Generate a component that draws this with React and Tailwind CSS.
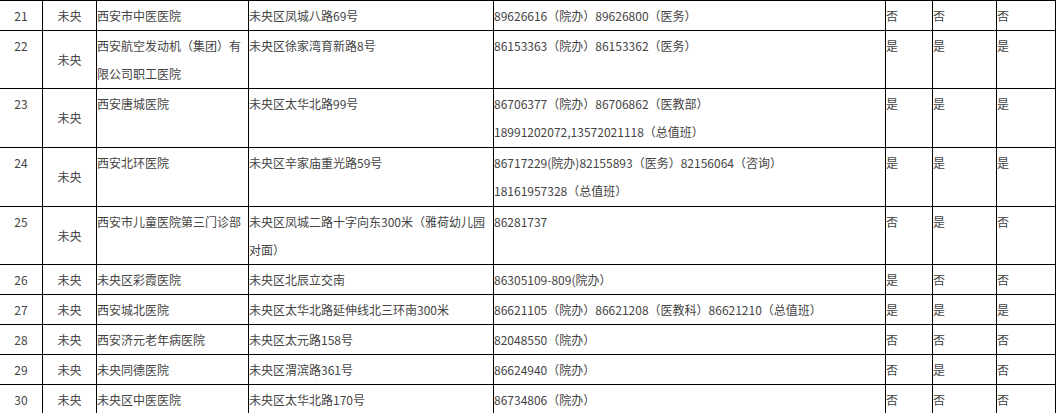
import React from 'react';

const rows = [
    { no: 21, h: 'h-[30px]', name: ['西安市中医医院'], addr: ['未央区凤城八路69号'], tel: ['89626616（院办）89626800（医务）'], flags: ['否', '否', '否'] },
    { no: 22, h: 'h-[57px]', name: ['西安航空发动机（集团）有', '限公司职工医院'], addr: ['未央区徐家湾育新路8号'], tel: ['86153363（院办）86153362（医务）'], flags: ['是', '是', '是'] },
    { no: 23, h: 'h-[59px]', name: ['西安唐城医院'], addr: ['未央区太华北路99号'], tel: ['86706377（院办）86706862（医教部）', '18991202072,13572021118（总值班）'], flags: ['是', '是', '是'] },
    { no: 24, h: 'h-[59px]', name: ['西安北环医院'], addr: ['未央区辛家庙重光路59号'], tel: ['86717229(院办)82155893（医务）82156064（咨询）', '18161957328（总值班）'], flags: ['是', '是', '是'] },
    { no: 25, h: 'h-[58px]', name: ['西安市儿童医院第三门诊部'], addr: ['未央区凤城二路十字向东300米（雅荷幼儿园', '对面）'], tel: ['86281737'], flags: ['否', '是', '否'] },
    { no: 26, h: 'h-[30px]', name: ['未央区彩霞医院'], addr: ['未央区北辰立交南'], tel: ['86305109-809(院办）'], flags: ['是', '否', '否'] },
    { no: 27, h: 'h-[30px]', name: ['西安城北医院'], addr: ['未央区太华北路延伸线北三环南300米'], tel: ['86621105（院办）86621208（医教科）86621210（总值班）'], flags: ['是', '是', '是'] },
    { no: 28, h: 'h-[30px]', name: ['西安济元老年病医院'], addr: ['未央区太元路158号'], tel: ['82048550（院办）'], flags: ['否', '否', '否'] },
    { no: 29, h: 'h-[29px]', name: ['未央同德医院'], addr: ['未央区渭滨路361号'], tel: ['86624940（院办）'], flags: ['否', '是', '否'] },
    { no: 30, h: 'h-[30px]', name: ['未央区中医医院'], addr: ['未央区太华北路170号'], tel: ['86734806（院办）'], flags: ['否', '否', '否'] },
];

const Lines = ({ items }) => (
    <>
        {items.map((t, i) => (
            <div key={i} className="whitespace-nowrap">{t}</div>
        ))}
    </>
);

const cell = 'border border-black align-top p-0 pt-px';

export default function App() {
    return (
        <div className="w-[1056px] h-[413px] overflow-hidden bg-white">
            <table
                className="table-fixed border-collapse -ml-px w-[1056px] text-[12px] leading-[28px] text-[#444]"
                style={{ fontFamily: '"Microsoft YaHei", "Noto Sans CJK SC", sans-serif' }}
            >
                <colgroup>
                    <col className="w-[43px]" />
                    <col className="w-[54px]" />
                    <col className="w-[152px]" />
                    <col className="w-[245px]" />
                    <col className="w-[392px]" />
                    <col className="w-[47px]" />
                    <col className="w-[64px]" />
                    <col className="w-[59px]" />
                </colgroup>
                <tbody>
                    {rows.map(r => (
                        <tr key={r.no} className={r.h}>
                            <td className={`${cell} text-center`}>{r.no}</td>
                            <td className="border border-black align-middle p-0 text-center">未央</td>
                            <td className={cell}><Lines items={r.name} /></td>
                            <td className={cell}><Lines items={r.addr} /></td>
                            <td className={cell}><Lines items={r.tel} /></td>
                            {r.flags.map((f, i) => (
                                <td key={i} className={cell}>{f}</td>
                            ))}
                        </tr>
                    ))}
                </tbody>
            </table>
        </div>
    );
}
